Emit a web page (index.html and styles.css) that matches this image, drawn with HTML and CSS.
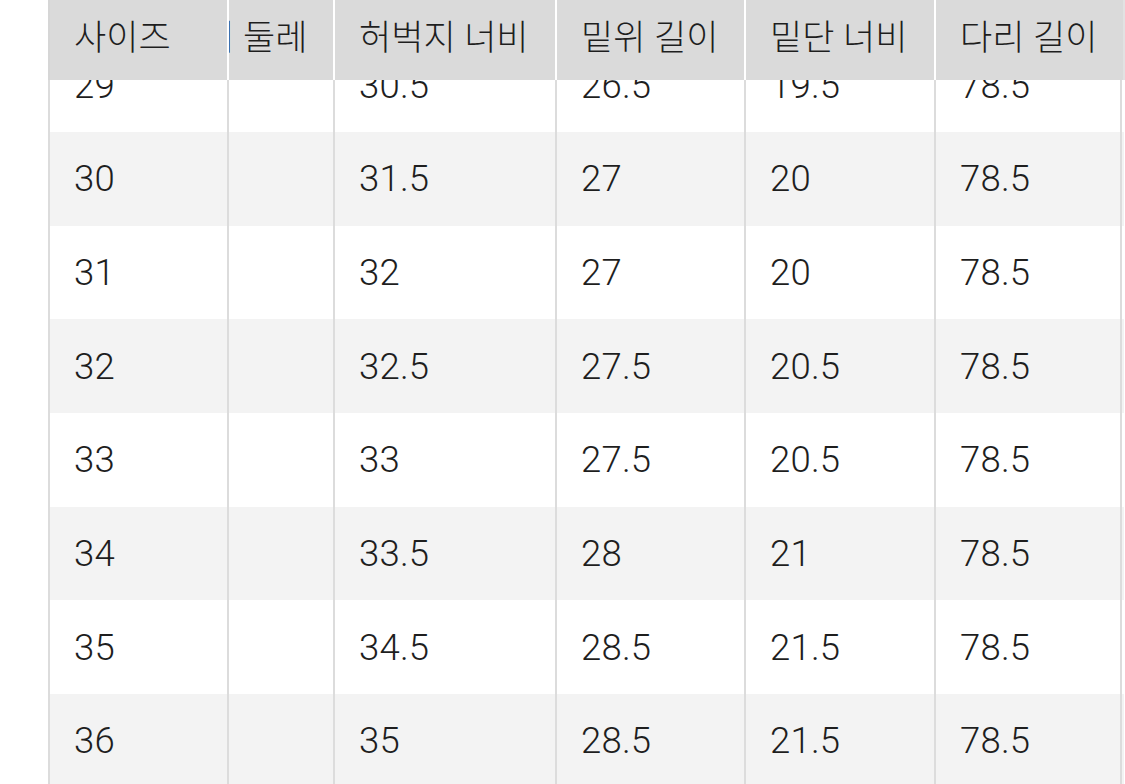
FILE: index.html
```html
<!DOCTYPE html>
<html lang="ko">
<head>
<meta charset="utf-8">
<title>사이즈 표</title>
<link rel="stylesheet" href="styles.css">
</head>
<body>
<div class="page">
  <div class="size-table">
    <div class="thead">
      <div class="cell head first">사이즈</div>
      <div class="cell head clip"><span class="shifted">허리 둘레</span></div>
      <div class="cell head">허벅지 너비</div>
      <div class="cell head">밑위 길이</div>
      <div class="cell head">밑단 너비</div>
      <div class="cell head last">다리 길이</div>
    </div>
    <div class="tbody-view">
      <div class="tbody">
        <div class="row"><div class="cell">29</div><div class="cell clip"><span class="shifted">37</span></div><div class="cell">30.5</div><div class="cell">26.5</div><div class="cell">19.5</div><div class="cell last">78.5</div></div>
        <div class="row alt"><div class="cell">30</div><div class="cell clip"><span class="shifted">39</span></div><div class="cell">31.5</div><div class="cell">27</div><div class="cell">20</div><div class="cell last">78.5</div></div>
        <div class="row"><div class="cell">31</div><div class="cell clip"><span class="shifted">40</span></div><div class="cell">32</div><div class="cell">27</div><div class="cell">20</div><div class="cell last">78.5</div></div>
        <div class="row alt"><div class="cell">32</div><div class="cell clip"><span class="shifted">41</span></div><div class="cell">32.5</div><div class="cell">27.5</div><div class="cell">20.5</div><div class="cell last">78.5</div></div>
        <div class="row"><div class="cell">33</div><div class="cell clip"><span class="shifted">42</span></div><div class="cell">33</div><div class="cell">27.5</div><div class="cell">20.5</div><div class="cell last">78.5</div></div>
        <div class="row alt"><div class="cell">34</div><div class="cell clip"><span class="shifted">43</span></div><div class="cell">33.5</div><div class="cell">28</div><div class="cell">21</div><div class="cell last">78.5</div></div>
        <div class="row"><div class="cell">35</div><div class="cell clip"><span class="shifted">44</span></div><div class="cell">34.5</div><div class="cell">28.5</div><div class="cell">21.5</div><div class="cell last">78.5</div></div>
        <div class="row alt"><div class="cell">36</div><div class="cell clip"><span class="shifted">45</span></div><div class="cell">35</div><div class="cell">28.5</div><div class="cell">21.5</div><div class="cell last">78.5</div></div>
      </div>
    </div>
  </div>
</div>
</body>
</html>
```

FILE: styles.css
```css
html, body {
  margin: 0;
  padding: 0;
  background: #ffffff;
}

body {
  width: 1125px;
  height: 784px;
  overflow: hidden;
  font-family: Roboto, "Noto Sans CJK KR", sans-serif;
  font-size: 35px;
  font-weight: 300;
  color: #1e1e1e;
}

.page {
  padding-left: 48px;
  height: 784px;
  overflow: hidden;
}

.size-table {
  width: 1077px;
}

.thead,
.row {
  display: grid;
  grid-template-columns: 179px 106px 222px 189px 190px 188px;
}

.thead {
  height: 80px;
  background: #dadada;
  position: relative;
  z-index: 1;
}

.cell {
  display: flex;
  align-items: center;
  padding-left: 24px;
  border-left: 2px solid #dcdcdc;
  white-space: nowrap;
  min-width: 0;
}

.row .cell {
  font-size: 36.5px;
  letter-spacing: 0.2px;
}

.head {
  border-left-color: #ffffff;
  padding-bottom: 12px;
}

.head.first {
  border-left-color: #d6d6d6;
}

.head.last {
  border-right: 2px solid #e2e2e2;
  margin-right: -3px;
}

.clip,
.row .cell.clip {
  padding-left: 0;
  overflow: hidden;
  justify-content: flex-end;
}

.shifted {
  flex: 0 0 auto;
  width: 187px;
  box-sizing: border-box;
  padding-left: 24px;
}

.tbody-view {
  height: 704px;
  overflow: hidden;
}

.tbody {
  margin-top: -41.7px;
}

.row {
  height: 93.7px;
  background: #ffffff;
  width: 1076px;
}

.row.alt {
  background: #f3f3f3;
}

.row .cell.last {
  border-right: 2px solid #dcdcdc;
}
```
